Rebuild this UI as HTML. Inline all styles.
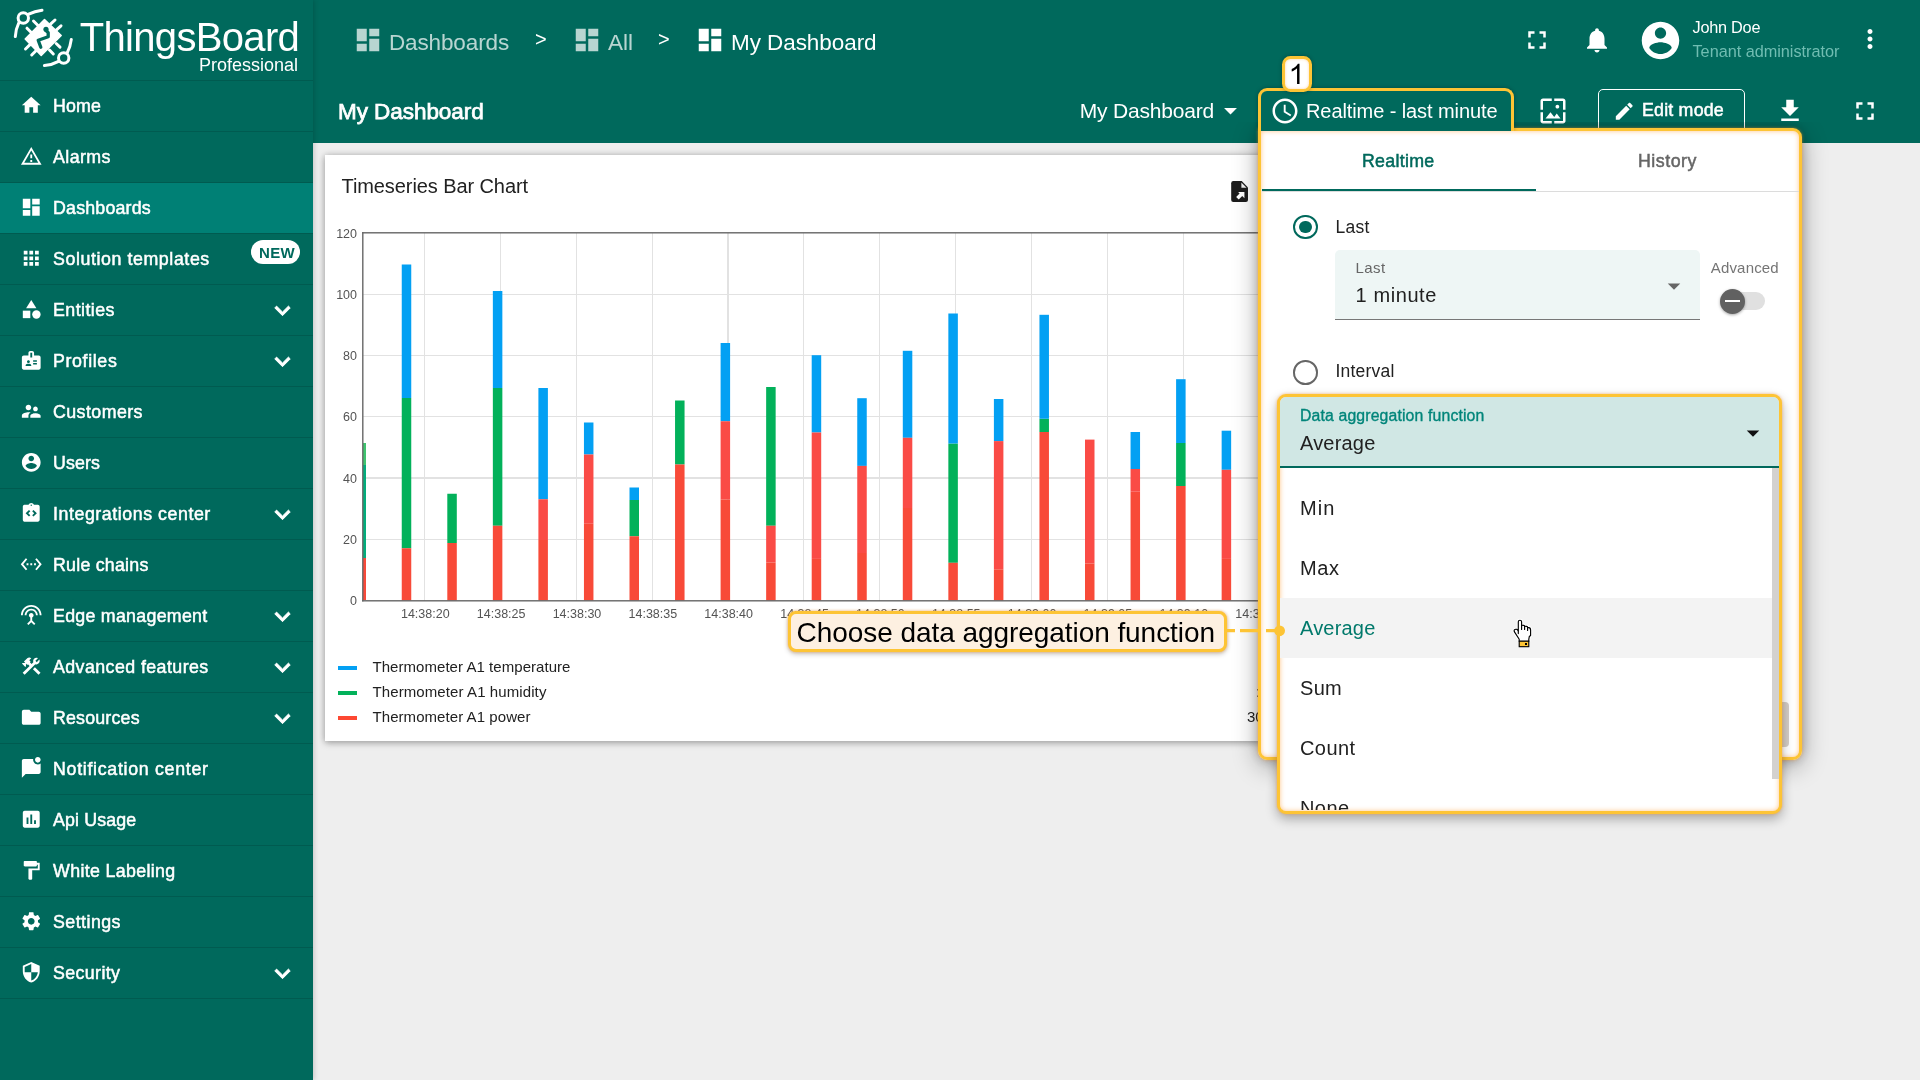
<!DOCTYPE html>
<html><head><meta charset="utf-8"><title>ThingsBoard</title>
<style>
html,body{margin:0;padding:0;}
body{width:1920px;height:1080px;overflow:hidden;position:relative;background:#eeeeee;font-family:"Liberation Sans",sans-serif;}
.ic{position:absolute;display:block;}
.t{position:absolute;white-space:nowrap;}
.a{position:absolute;}
.mi{height:24px;line-height:24px;font-size:17px;font-weight:bold;color:#fff;letter-spacing:0.1px;}
#root{position:absolute;left:0;top:0;width:1920px;height:1080px;overflow:hidden;will-change:transform;}

</style></head>
<body>
<div id="root">
<div class="a" style="left:0;top:0;width:1920px;height:143px;background:#00695c;"></div>
<div class="a" style="left:0;top:0;width:313px;height:1080px;background:#00695c;box-shadow:1px 0 5px rgba(0,0,0,0.18);"></div>
<div class="a" style="left:0;top:80px;width:313px;height:1px;background:rgba(0,0,0,0.13);"></div>
<div class="a" style="left:0;top:131px;width:313px;height:1px;background:rgba(0,0,0,0.13);"></div>
<div class="a" style="left:0;top:182px;width:313px;height:1px;background:rgba(0,0,0,0.13);"></div>
<div class="a" style="left:0;top:233px;width:313px;height:1px;background:rgba(0,0,0,0.13);"></div>
<div class="a" style="left:0;top:284px;width:313px;height:1px;background:rgba(0,0,0,0.13);"></div>
<div class="a" style="left:0;top:335px;width:313px;height:1px;background:rgba(0,0,0,0.13);"></div>
<div class="a" style="left:0;top:386px;width:313px;height:1px;background:rgba(0,0,0,0.13);"></div>
<div class="a" style="left:0;top:437px;width:313px;height:1px;background:rgba(0,0,0,0.13);"></div>
<div class="a" style="left:0;top:488px;width:313px;height:1px;background:rgba(0,0,0,0.13);"></div>
<div class="a" style="left:0;top:539px;width:313px;height:1px;background:rgba(0,0,0,0.13);"></div>
<div class="a" style="left:0;top:590px;width:313px;height:1px;background:rgba(0,0,0,0.13);"></div>
<div class="a" style="left:0;top:641px;width:313px;height:1px;background:rgba(0,0,0,0.13);"></div>
<div class="a" style="left:0;top:692px;width:313px;height:1px;background:rgba(0,0,0,0.13);"></div>
<div class="a" style="left:0;top:743px;width:313px;height:1px;background:rgba(0,0,0,0.13);"></div>
<div class="a" style="left:0;top:794px;width:313px;height:1px;background:rgba(0,0,0,0.13);"></div>
<div class="a" style="left:0;top:845px;width:313px;height:1px;background:rgba(0,0,0,0.13);"></div>
<div class="a" style="left:0;top:896px;width:313px;height:1px;background:rgba(0,0,0,0.13);"></div>
<div class="a" style="left:0;top:947px;width:313px;height:1px;background:rgba(0,0,0,0.13);"></div>
<div class="a" style="left:0;top:998px;width:313px;height:1px;background:rgba(0,0,0,0.13);"></div>
<div class="a" style="left:0;top:183px;width:313px;height:50px;background:#008075;"></div>
<svg class="ic" style="left:20px;top:93.8px;width:22.5px;height:22.5px;fill:#fff;" viewBox="0 0 24 24"><path d="M10 20v-6h4v6h5v-8h3L12 3 2 12h3v8z"/></svg>
<div class="t" style="left:53px;top:93.9px;height:25px;line-height:25px;font-size:17.8px;color:#fff;font-weight:normal;letter-spacing:0.129px;-webkit-text-stroke:0.5px #fff;">Home</div>
<svg class="ic" style="left:20px;top:144.8px;width:22.5px;height:22.5px;fill:#fff;" viewBox="0 0 24 24"><path d="M12 5.99L19.53 19H4.47L12 5.99M12 2L1 21h22L12 2zm1 14h-2v2h2v-2zm0-6h-2v4h2v-4z"/></svg>
<div class="t" style="left:53px;top:144.9px;height:25px;line-height:25px;font-size:17.8px;color:#fff;font-weight:normal;letter-spacing:0.436px;-webkit-text-stroke:0.5px #fff;">Alarms</div>
<svg class="ic" style="left:20px;top:195.8px;width:22.5px;height:22.5px;fill:#fff;" viewBox="0 0 24 24"><path d="M3 13h8V3H3v10zm0 8h8v-6H3v6zm10 0h8V11h-8v10zm0-18v6h8V3h-8z"/></svg>
<div class="t" style="left:53px;top:195.9px;height:25px;line-height:25px;font-size:17.8px;color:#fff;font-weight:normal;letter-spacing:0.202px;-webkit-text-stroke:0.5px #fff;">Dashboards</div>
<svg class="ic" style="left:20px;top:246.8px;width:22.5px;height:22.5px;fill:#fff;" viewBox="0 0 24 24"><path d="M4 8h4V4H4v4zm6 12h4v-4h-4v4zm-6 0h4v-4H4v4zm0-6h4v-4H4v4zm6 0h4v-4h-4v4zm6-10v4h4V4h-4zm-6 4h4V4h-4v4zm6 6h4v-4h-4v4zm0 6h4v-4h-4v4z"/></svg>
<div class="t" style="left:53px;top:246.89999999999998px;height:25px;line-height:25px;font-size:17.8px;color:#fff;font-weight:normal;letter-spacing:0.586px;-webkit-text-stroke:0.5px #fff;">Solution templates</div>
<svg class="ic" style="left:20px;top:297.8px;width:22.5px;height:22.5px;fill:#fff;" viewBox="0 0 24 24"><path d="M12 2l-5.5 9h11z"/><circle cx="17.5" cy="17.5" r="4.5"/><path d="M3 13.5h8v8H3z"/></svg>
<div class="t" style="left:53px;top:297.9px;height:25px;line-height:25px;font-size:17.8px;color:#fff;font-weight:normal;letter-spacing:0.453px;-webkit-text-stroke:0.5px #fff;">Entities</div>
<svg class="ic" style="left:266.5px;top:294.5px;width:31px;height:31px;fill:#fff;stroke:#fff;stroke-width:0.7;" viewBox="0 0 24 24"><path d="M16.59 8.59L12 13.170 7.410 8.590 6 10l6 6 6-6z"/></svg>
<svg class="ic" style="left:20px;top:348.8px;width:22.5px;height:22.5px;fill:#fff;" viewBox="0 0 24 24"><path d="M20 7h-5V4c0-1.1-.9-2-2-2h-2c-1.1 0-2 .9-2 2v3H4c-1.1 0-2 .9-2 2v11c0 1.1.9 2 2 2h16c1.1 0 2-.9 2-2V9c0-1.1-.9-2-2-2zM9 12c.83 0 1.5.67 1.5 1.5S9.83 15 9 15s-1.5-.67-1.5-1.5S8.17 12 9 12zm3 6H6v-.75c0-1 2-1.5 3-1.5s3 .5 3 1.5V18zm1-9h-2V4h2v5zm5 7.5h-4V15h4v1.5zm0-3h-4V12h4v1.5z"/></svg>
<div class="t" style="left:53px;top:348.9px;height:25px;line-height:25px;font-size:17.8px;color:#fff;font-weight:normal;letter-spacing:0.643px;-webkit-text-stroke:0.5px #fff;">Profiles</div>
<svg class="ic" style="left:266.5px;top:345.5px;width:31px;height:31px;fill:#fff;stroke:#fff;stroke-width:0.7;" viewBox="0 0 24 24"><path d="M16.59 8.59L12 13.170 7.410 8.590 6 10l6 6 6-6z"/></svg>
<svg class="ic" style="left:20px;top:399.8px;width:22.5px;height:22.5px;fill:#fff;" viewBox="0 0 24 24"><path d="M16.5 12c1.38 0 2.49-1.12 2.49-2.5S17.88 7 16.5 7C15.12 7 14 8.12 14 9.5s1.12 2.5 2.5 2.5zM9 11c1.66 0 2.99-1.34 2.99-3S10.66 5 9 5C7.34 5 6 6.34 6 8s1.34 3 3 3zm7.5 3c-1.83 0-5.5.92-5.5 2.75V19h11v-2.25c0-1.83-3.67-2.75-5.5-2.75zM9 13c-2.33 0-7 1.17-7 3.5V19h7v-2.25c0-.85.33-2.34 2.37-3.47C10.5 13.1 9.66 13 9 13z"/></svg>
<div class="t" style="left:53px;top:399.9px;height:25px;line-height:25px;font-size:17.8px;color:#fff;font-weight:normal;letter-spacing:0.438px;-webkit-text-stroke:0.5px #fff;">Customers</div>
<svg class="ic" style="left:20px;top:450.8px;width:22.5px;height:22.5px;fill:#fff;" viewBox="0 0 24 24"><path d="M12 2C6.48 2 2 6.48 2 12s4.48 10 10 10 10-4.48 10-10S17.52 2 12 2zm0 3c1.66 0 3 1.34 3 3s-1.34 3-3 3-3-1.34-3-3 1.34-3 3-3zm0 14.2c-2.5 0-4.71-1.28-6-3.22.03-1.99 4-3.08 6-3.08 1.99 0 5.97 1.09 6 3.08-1.29 1.94-3.5 3.220-6 3.220z"/></svg>
<div class="t" style="left:53px;top:450.9px;height:25px;line-height:25px;font-size:17.8px;color:#fff;font-weight:normal;letter-spacing:0.103px;-webkit-text-stroke:0.5px #fff;">Users</div>
<svg class="ic" style="left:20px;top:501.8px;width:22.5px;height:22.5px;fill:#fff;" viewBox="0 0 24 24"><path d="M19 3h-4.180C14.4 1.84 13.3 1 12 1s-2.4.84-2.82 2H5c-.14 0-.27.01-.4.04-.39.08-.74.28-1.010.55-.18.18-.33.4-.43.64-.1.23-.16.49-.16.77v14c0 .27.06.54.16.78s.25.45.43.64c.27.27.62.47 1.010.55.13.02.26.03.4.03h14c1.1 0 2-.9 2-2V5c0-1.1-.9-2-2-2zm-8 11.170l-1.410 1.420L6 12l3.590-3.590L11 9.830 8.830 12 11 14.170zm1-9.920c-.41 0-.75-.34-.75-.75s.34-.75.75-.75.75.34.75.75-.34.75-.75.75zm2.410 11.340L13 14.170 15.170 12 13 9.830l1.410-1.420L18 12l-3.590 3.590z"/></svg>
<div class="t" style="left:53px;top:501.9px;height:25px;line-height:25px;font-size:17.8px;color:#fff;font-weight:normal;letter-spacing:0.556px;-webkit-text-stroke:0.5px #fff;">Integrations center</div>
<svg class="ic" style="left:266.5px;top:498.5px;width:31px;height:31px;fill:#fff;stroke:#fff;stroke-width:0.7;" viewBox="0 0 24 24"><path d="M16.59 8.59L12 13.170 7.410 8.590 6 10l6 6 6-6z"/></svg>
<svg class="ic" style="left:20px;top:552.8px;width:22.5px;height:22.5px;fill:#fff;" viewBox="0 0 24 24"><path d="M7.77 6.76L6.23 5.48.82 12l5.410 6.520 1.540-1.280L3.420 12l4.350-5.240zM7 13h2v-2H7v2zm10-2h-2v2h2v-2zm-6 2h2v-2h-2v2zm6.770-7.520l-1.540 1.280L20.580 12l-4.350 5.240 1.540 1.280L23.180 12l-5.410-6.520z"/></svg>
<div class="t" style="left:53px;top:552.9px;height:25px;line-height:25px;font-size:17.8px;color:#fff;font-weight:normal;letter-spacing:0.236px;-webkit-text-stroke:0.5px #fff;">Rule chains</div>
<svg class="ic" style="left:20px;top:603.8px;width:22.5px;height:22.5px;fill:#fff;" viewBox="0 0 24 24"><path d="M12 5c-3.870 0-7 3.130-7 7h2c0-2.760 2.240-5 5-5s5 2.240 5 5h2c0-3.870-3.130-7-7-7zm1 9.290c.88-.39 1.5-1.260 1.5-2.290 0-1.380-1.120-2.500-2.500-2.500S9.500 10.620 9.500 12c0 1.020.62 1.900 1.500 2.290v3.300L7.590 21 9 22.410l3-3 3 3L16.410 21 13 17.590v-3.300zM12 1C5.930 1 1 5.930 1 12h2c0-4.970 4.030-9 9-9s9 4.030 9 9h2c0-6.070-4.930-11-11-11z"/></svg>
<div class="t" style="left:53px;top:603.9px;height:25px;line-height:25px;font-size:17.8px;color:#fff;font-weight:normal;letter-spacing:0.279px;-webkit-text-stroke:0.5px #fff;">Edge management</div>
<svg class="ic" style="left:266.5px;top:600.5px;width:31px;height:31px;fill:#fff;stroke:#fff;stroke-width:0.7;" viewBox="0 0 24 24"><path d="M16.59 8.59L12 13.170 7.410 8.590 6 10l6 6 6-6z"/></svg>
<svg class="ic" style="left:20px;top:654.8px;width:22.5px;height:22.5px;fill:#fff;" viewBox="0 0 24 24"><path d="M13.783 15.172l2.121-2.121 5.996 5.996-2.121 2.121zM17.5 10c1.930 0 3.500-1.570 3.500-3.500 0-.58-.16-1.120-.41-1.600l-2.700 2.700-1.490-1.490 2.700-2.700c-.48-.25-1.020-.41-1.600-.41C15.570 3 14 4.570 14 6.500c0 .41.08.8.21 1.160l-1.850 1.850-1.780-1.780.71-.71-1.410-1.410L12 3.490c-1.170-1.170-3.070-1.170-4.240 0L4.220 7.030l1.410 1.410H2.810l-.71.71 3.540 3.540.71-.71V9.150l1.410 1.410.71-.71 1.780 1.780-7.410 7.410 2.120 2.120L16.340 9.790c.36.13.75.21 1.160.21z"/></svg>
<div class="t" style="left:53px;top:654.9px;height:25px;line-height:25px;font-size:17.8px;color:#fff;font-weight:normal;letter-spacing:0.433px;-webkit-text-stroke:0.5px #fff;">Advanced features</div>
<svg class="ic" style="left:266.5px;top:651.5px;width:31px;height:31px;fill:#fff;stroke:#fff;stroke-width:0.7;" viewBox="0 0 24 24"><path d="M16.59 8.59L12 13.170 7.410 8.590 6 10l6 6 6-6z"/></svg>
<svg class="ic" style="left:20px;top:705.8px;width:22.5px;height:22.5px;fill:#fff;" viewBox="0 0 24 24"><path d="M10 4H4c-1.1 0-1.990.9-1.990 2L2 18c0 1.100.9 2 2 2h16c1.100 0 2-.9 2-2V8c0-1.100-.9-2-2-2h-8l-2-2z"/></svg>
<div class="t" style="left:53px;top:705.9px;height:25px;line-height:25px;font-size:17.8px;color:#fff;font-weight:normal;letter-spacing:0.191px;-webkit-text-stroke:0.5px #fff;">Resources</div>
<svg class="ic" style="left:266.5px;top:702.5px;width:31px;height:31px;fill:#fff;stroke:#fff;stroke-width:0.7;" viewBox="0 0 24 24"><path d="M16.59 8.59L12 13.170 7.410 8.590 6 10l6 6 6-6z"/></svg>
<svg class="ic" style="left:20px;top:756.8px;width:22.5px;height:22.5px;fill:#fff;" viewBox="0 0 24 24"><path d="M22 6.980V16c0 1.100-.9 2-2 2H6l-4 4V4c0-1.100.9-2 2-2h10.100c-.06.32-.1.66-.1 1 0 2.760 2.240 5 5 5 1.130 0 2.160-.39 3-1.020zM16 3c0 1.660 1.340 3 3 3s3-1.340 3-3-1.340-3-3-3-3 1.340-3 3z"/></svg>
<div class="t" style="left:53px;top:756.9px;height:25px;line-height:25px;font-size:17.8px;color:#fff;font-weight:normal;letter-spacing:0.701px;-webkit-text-stroke:0.5px #fff;">Notification center</div>
<svg class="ic" style="left:20px;top:807.8px;width:22.5px;height:22.5px;fill:#fff;" viewBox="0 0 24 24"><path d="M19 3H5c-1.100 0-2 .9-2 2v14c0 1.100.9 2 2 2h14c1.100 0 2-.9 2-2V5c0-1.100-.9-2-2-2zM9 17H7v-7h2v7zm4 0h-2V7h2v10zm4 0h-2v-4h2v4z"/></svg>
<div class="t" style="left:53px;top:807.9px;height:25px;line-height:25px;font-size:17.8px;color:#fff;font-weight:normal;letter-spacing:0.141px;-webkit-text-stroke:0.5px #fff;">Api Usage</div>
<svg class="ic" style="left:20px;top:858.8px;width:22.5px;height:22.5px;fill:#fff;" viewBox="0 0 24 24"><path d="M18 4V3c0-.55-.45-1-1-1H5c-.55 0-1 .45-1 1v4c0 .55.45 1 1 1h12c.55 0 1-.45 1-1V6h1v4H9v11c0 .55.45 1 1 1h2c.55 0 1-.45 1-1v-9h8V4h-3z"/></svg>
<div class="t" style="left:53px;top:858.9px;height:25px;line-height:25px;font-size:17.8px;color:#fff;font-weight:normal;letter-spacing:0.353px;-webkit-text-stroke:0.5px #fff;">White Labeling</div>
<svg class="ic" style="left:20px;top:909.8px;width:22.5px;height:22.5px;fill:#fff;" viewBox="0 0 24 24"><path d="M19.14 12.94c.04-.3.06-.61.06-.94 0-.32-.02-.64-.07-.94l2.030-1.580c.18-.14.23-.41.12-.61l-1.920-3.320c-.12-.22-.37-.29-.59-.22l-2.390.96c-.5-.38-1.030-.7-1.620-.94l-.36-2.540c-.04-.24-.24-.41-.48-.41h-3.840c-.24 0-.43.17-.47.41l-.36 2.540c-.59.24-1.130.57-1.620.94l-2.390-.96c-.22-.08-.47 0-.59.22L2.740 8.870c-.12.21-.08.47.12.61l2.030 1.580c-.05.3-.09.63-.09.940s.02.640.07.940l-2.030 1.580c-.18.14-.23.41-.12.61l1.920 3.320c.12.22.37.29.59.22l2.390-.96c.5.38 1.030.7 1.620.94l.36 2.540c.05.24.24.41.48.41h3.840c.24 0 .44-.17.47-.41l.36-2.540c.59-.24 1.130-.56 1.620-.94l2.390.96c.22.08.47 0 .59-.22l1.920-3.320c.12-.22.07-.47-.12-.61l-2.010-1.580zM12 15.600c-1.980 0-3.600-1.620-3.600-3.600s1.620-3.600 3.600-3.600 3.600 1.620 3.600 3.600-1.620 3.600-3.600 3.600z"/></svg>
<div class="t" style="left:53px;top:909.9px;height:25px;line-height:25px;font-size:17.8px;color:#fff;font-weight:normal;letter-spacing:0.46px;-webkit-text-stroke:0.5px #fff;">Settings</div>
<svg class="ic" style="left:20px;top:960.8px;width:22.5px;height:22.5px;fill:#fff;" viewBox="0 0 24 24"><path d="M12 1L3 5v6c0 5.550 3.840 10.740 9 12 5.160-1.260 9-6.450 9-12V5l-9-4zm0 10.990h7c-.53 4.120-3.280 7.790-7 8.940V12H5V6.300l7-3.110v8.800z"/></svg>
<div class="t" style="left:53px;top:960.9px;height:25px;line-height:25px;font-size:17.8px;color:#fff;font-weight:normal;letter-spacing:0.387px;-webkit-text-stroke:0.5px #fff;">Security</div>
<svg class="ic" style="left:266.5px;top:957.5px;width:31px;height:31px;fill:#fff;stroke:#fff;stroke-width:0.7;" viewBox="0 0 24 24"><path d="M16.59 8.59L12 13.170 7.410 8.590 6 10l6 6 6-6z"/></svg>
<div class="a" style="left:251px;top:240px;width:49px;height:24px;border-radius:12px;background:#fff;"></div>
<div class="t" style="left:259px;top:242.0px;height:21px;line-height:21px;font-size:15px;color:#00695c;font-weight:bold;letter-spacing:0.3px;">NEW</div>
<div class="t" style="left:79.7px;top:9.0px;height:56px;line-height:56px;font-size:40px;color:#fff;font-weight:normal;letter-spacing:-0.664px;">ThingsBoard</div>
<div class="t" style="left:199px;top:52.5px;height:25px;line-height:25px;font-size:18px;color:#fff;font-weight:normal;letter-spacing:-0.005px;">Professional</div>
<svg class="ic" style="left:0;top:0;width:84px;height:76px;" viewBox="0 0 84 76" fill="none" stroke="#fff" stroke-linecap="round">
<g stroke-width="3">
<path d="M33.500 21l4.500 4.500M27 28.200l4.500 4.500M55 20l-4.500 4.200M61 25.800l-4.500 4M25.500 49l4.500-4.300M31.700 55l4.300-4.300M49.500 50l3.800 4M56.200 43.500l3.800 3.600"/>
<path d="M28.700 14.200c4-2 8.500-3.300 13.300-3.900M18.800 22.800c-2 4-3.200 8.800-3.500 13.800"/>
<path d="M67.300 52.600c2-3.800 3.400-8.400 4-13.200M58.600 61.400c-4 2.200-9 3.700-14.200 4.200"/>
</g>
<circle cx="23.300" cy="18" r="5.200" stroke-width="3"/>
<circle cx="63.700" cy="58" r="5.200" stroke-width="3"/>
<path d="M44.500 19.500l16.700 16-20 20L25.200 39z" fill="#fff" stroke="#fff" stroke-width="1.500" stroke-linejoin="round"/>
<circle cx="46" cy="29.300" r="2.600" fill="#00695c" stroke="none"/>
<path d="M46 30.500l2.200 2.200v4l-10 3.500 2.600 7" stroke="#00695c" stroke-width="3.300" stroke-linejoin="round"/>
</svg>
<svg class="ic" style="left:352.5px;top:25px;width:30px;height:30px;fill:rgba(255,255,255,0.72);" viewBox="0 0 24 24"><path d="M3 13h8V3H3v10zm0 8h8v-6H3v6zm10 0h8V11h-8v10zm0-18v6h8V3h-8z"/></svg>
<div class="t" style="left:389px;top:27.0px;height:31px;line-height:31px;font-size:22.5px;color:rgba(255,255,255,0.72);font-weight:normal;letter-spacing:-0.133px;">Dashboards</div>
<div class="t" style="left:535px;top:25.0px;height:28px;line-height:28px;font-size:20px;color:#fff;font-weight:normal;letter-spacing:0px;">&gt;</div>
<svg class="ic" style="left:571.5px;top:25px;width:30px;height:30px;fill:rgba(255,255,255,0.72);" viewBox="0 0 24 24"><path d="M3 13h8V3H3v10zm0 8h8v-6H3v6zm10 0h8V11h-8v10zm0-18v6h8V3h-8z"/></svg>
<div class="t" style="left:608px;top:27.0px;height:31px;line-height:31px;font-size:22.5px;color:rgba(255,255,255,0.72);font-weight:normal;letter-spacing:0px;">All</div>
<div class="t" style="left:658px;top:25.0px;height:28px;line-height:28px;font-size:20px;color:#fff;font-weight:normal;letter-spacing:0px;">&gt;</div>
<svg class="ic" style="left:695px;top:25px;width:30px;height:30px;fill:#fff;" viewBox="0 0 24 24"><path d="M3 13h8V3H3v10zm0 8h8v-6H3v6zm10 0h8V11h-8v10zm0-18v6h8V3h-8z"/></svg>
<div class="t" style="left:731px;top:27.0px;height:31px;line-height:31px;font-size:22.5px;color:#fff;font-weight:normal;letter-spacing:-0.068px;">My Dashboard</div>
<svg class="ic" style="left:1522px;top:24.5px;width:30px;height:30px;fill:#fff;" viewBox="0 0 24 24"><path d="M7 14H5v5h5v-2H7v-3zm-2-4h2V7h3V5H5v5zm12 7h-3v2h5v-5h-2v3zM14 5v2h3v3h2V5h-5z"/></svg>
<svg class="ic" style="left:1582px;top:25px;width:30px;height:30px;fill:#fff;" viewBox="0 0 24 24"><path d="M12 22c1.100 0 2-.9 2-2h-4c0 1.100.89 2 2 2zm6-6v-5c0-3.070-1.640-5.640-4.500-6.320V4c0-.83-.67-1.500-1.500-1.500s-1.500.67-1.500 1.500v.68C7.630 5.360 6 7.920 6 11v5l-2 2v1h16v-1l-2-2z"/></svg>
<svg class="ic" style="left:1637.5px;top:17.5px;width:45px;height:45px;fill:#fff;" viewBox="0 0 24 24"><path d="M12 2C6.48 2 2 6.48 2 12s4.48 10 10 10 10-4.48 10-10S17.52 2 12 2zm0 3c1.66 0 3 1.34 3 3s-1.34 3-3 3-3-1.34-3-3 1.34-3 3-3zm0 14.2c-2.5 0-4.71-1.28-6-3.22.03-1.99 4-3.08 6-3.08 1.99 0 5.97 1.09 6 3.08-1.29 1.94-3.5 3.220-6 3.220z"/></svg>
<div class="t" style="left:1692.5px;top:16.0px;height:23px;line-height:23px;font-size:16.3px;color:#fff;font-weight:normal;letter-spacing:-0.247px;">John Doe</div>
<div class="t" style="left:1692.5px;top:39.5px;height:23px;line-height:23px;font-size:16.3px;color:#70bdb2;font-weight:normal;letter-spacing:-0.034px;">Tenant administrator</div>
<svg class="ic" style="left:1855px;top:24.2px;width:30px;height:30px;fill:#fff;" viewBox="0 0 24 24"><path d="M12 8c1.100 0 2-.9 2-2s-.9-2-2-2-2 .9-2 2 .9 2 2 2zm0 2c-1.100 0-2 .9-2 2s.9 2 2 2 2-.9 2-2-.9-2-2-2zm0 6c-1.100 0-2 .9-2 2s.9 2 2 2 2-.9 2-2-.9-2-2-2z"/></svg>
<div class="t" style="left:338px;top:95.5px;height:31px;line-height:31px;font-size:22.5px;color:#fff;font-weight:normal;letter-spacing:-0.052px;-webkit-text-stroke:0.75px #fff;">My Dashboard</div>
<div class="t" style="left:1079.7px;top:95.8px;height:29px;line-height:29px;font-size:21px;color:#fff;font-weight:normal;letter-spacing:-0.189px;">My Dashboard</div>
<svg class="ic" style="left:1214.5px;top:95.3px;width:31px;height:31px;fill:#fff;" viewBox="0 0 24 24"><path d="M7 10l5 5 5-5z"/></svg>
<svg class="ic" style="left:1538px;top:96px;width:30px;height:30px;fill:#fff;" viewBox="0 0 24 24"><path d="M4 4h7V2H4c-1.100 0-2 .9-2 2v7h2V4zm6 9l-4 5h12l-3-4-2.030 2.710L10 13zm7-4.500c0-.83-.67-1.500-1.500-1.500S14 7.670 14 8.500s.67 1.500 1.500 1.500S17 9.330 17 8.500zM20 2h-7v2h7v7h2V4c0-1.100-.9-2-2-2zm0 18h-7v2h7c1.100 0 2-.9 2-2v-7h-2v7zM4 13H2v7c0 1.100.9 2 2 2h7v-2H4v-7z"/></svg>
<div class="a" style="left:1598px;top:89px;width:145px;height:44px;border:1px solid #fff;border-radius:5px;"></div>
<svg class="ic" style="left:1612.5px;top:99.5px;width:22.5px;height:22.5px;fill:#fff;" viewBox="0 0 24 24"><path d="M3 17.250V21h3.750L17.810 9.940l-3.750-3.750L3 17.250zM20.710 7.040c.39-.39.39-1.020 0-1.410l-2.340-2.340c-.39-.39-1.020-.39-1.410 0l-1.830 1.830 3.750 3.750 1.830-1.830z"/></svg>
<div class="t" style="left:1642px;top:98.0px;height:25px;line-height:25px;font-size:17.8px;color:#fff;font-weight:normal;letter-spacing:0.206px;-webkit-text-stroke:0.5px #fff;">Edit mode</div>
<svg class="ic" style="left:1775px;top:95.5px;width:30px;height:30px;fill:#fff;" viewBox="0 0 24 24"><path d="M19 9h-4V3H9v6H5l7 7 7-7zM5 18v2h14v-2H5z"/></svg>
<svg class="ic" style="left:1850px;top:95.7px;width:30px;height:30px;fill:#fff;" viewBox="0 0 24 24"><path d="M7 14H5v5h5v-2H7v-3zm-2-4h2V7h3V5H5v5zm12 7h-3v2h5v-5h-2v3zM14 5v2h3v3h2V5h-5z"/></svg>
<div class="a" style="left:325px;top:155px;width:1400px;height:586px;background:#fff;box-shadow:0 2px 7px rgba(0,0,0,0.28),0 0 7px rgba(0,0,0,0.15);"></div>
<div class="t" style="left:341.5px;top:171.5px;height:28px;line-height:28px;font-size:20px;color:#212121;font-weight:normal;letter-spacing:-0.085px;">Timeseries Bar Chart</div>
<svg class="ic" style="left:1226.800px;top:178.900px;width:25.200px;height:25.200px;" viewBox="0 0 24 24"><path d="M6 2h8l6 6v12a2 2 0 0 1-2 2H6a2 2 0 0 1-2-2V4a2 2 0 0 1 2-2z" fill="#1c1c1c"/><path d="M13.700 3.400V8.300h4.900z" fill="#f2f2f2"/><path d="M10.600 12.400h6v6l-2.100-2.100-3.300 3.300-2.500-2.500 3.300-3.300z" fill="#fff"/></svg>
<svg class="ic" style="left:325px;top:155px;width:1400px;height:586px;" viewBox="325 155 1400 586" shape-rendering="crispEdges"><rect x="424.00" y="233" width="1.2" height="367.5" fill="#e2e2e2"/><rect x="499.85" y="233" width="1.2" height="367.5" fill="#e2e2e2"/><rect x="575.70" y="233" width="1.2" height="367.5" fill="#e2e2e2"/><rect x="651.55" y="233" width="1.2" height="367.5" fill="#e2e2e2"/><rect x="727.40" y="233" width="1.2" height="367.5" fill="#e2e2e2"/><rect x="803.25" y="233" width="1.2" height="367.5" fill="#e2e2e2"/><rect x="879.10" y="233" width="1.2" height="367.5" fill="#e2e2e2"/><rect x="954.95" y="233" width="1.2" height="367.5" fill="#e2e2e2"/><rect x="1030.80" y="233" width="1.2" height="367.5" fill="#e2e2e2"/><rect x="1106.65" y="233" width="1.2" height="367.5" fill="#e2e2e2"/><rect x="1182.50" y="233" width="1.2" height="367.5" fill="#e2e2e2"/><rect x="1258.35" y="233" width="1.2" height="367.5" fill="#e2e2e2"/><rect x="1334.20" y="233" width="1.2" height="367.5" fill="#e2e2e2"/><rect x="1410.05" y="233" width="1.2" height="367.5" fill="#e2e2e2"/><rect x="1485.90" y="233" width="1.2" height="367.5" fill="#e2e2e2"/><rect x="1561.75" y="233" width="1.2" height="367.5" fill="#e2e2e2"/><rect x="1637.60" y="233" width="1.2" height="367.5" fill="#e2e2e2"/><rect x="1713.45" y="233" width="1.2" height="367.5" fill="#e2e2e2"/><rect x="363" y="538.65" width="1337" height="1.2" fill="#e2e2e2"/><rect x="363" y="477.40" width="1337" height="1.2" fill="#e2e2e2"/><rect x="363" y="416.15" width="1337" height="1.2" fill="#e2e2e2"/><rect x="363" y="354.90" width="1337" height="1.2" fill="#e2e2e2"/><rect x="363" y="293.65" width="1337" height="1.2" fill="#e2e2e2"/><g shape-rendering="geometricPrecision"><rect x="401.75" y="398" width="9.500" height="150.25" fill="#02b15a"/><rect x="401.75" y="264.5" width="9.500" height="133.50" fill="#03a0f3"/><rect x="401.75" y="548.25" width="9.500" height="52.25" fill="#f84a38"/><rect x="447.30" y="493.75" width="9.500" height="49.25" fill="#02b15a"/><rect x="447.30" y="543" width="9.500" height="57.50" fill="#f84a38"/><rect x="492.85" y="388" width="9.500" height="137.75" fill="#02b15a"/><rect x="492.85" y="291" width="9.500" height="97.00" fill="#03a0f3"/><rect x="492.85" y="525.75" width="9.500" height="74.75" fill="#f84a38"/><rect x="538.40" y="388" width="9.500" height="111.25" fill="#03a0f3"/><rect x="538.40" y="499.25" width="9.500" height="40.75" fill="#fa4b46"/><rect x="538.40" y="540" width="9.500" height="60.50" fill="#f84a38"/><rect x="583.95" y="422.5" width="9.500" height="32.00" fill="#03a0f3"/><rect x="583.95" y="454.5" width="9.500" height="69.25" fill="#fa4b46"/><rect x="583.95" y="523.75" width="9.500" height="76.75" fill="#f84a38"/><rect x="629.50" y="500" width="9.500" height="36.25" fill="#02b15a"/><rect x="629.50" y="487.5" width="9.500" height="12.50" fill="#03a0f3"/><rect x="629.50" y="536.25" width="9.500" height="64.25" fill="#f84a38"/><rect x="675.05" y="400.5" width="9.500" height="64.00" fill="#02b15a"/><rect x="675.05" y="464.5" width="9.500" height="136.00" fill="#f84a38"/><rect x="720.60" y="343" width="9.500" height="78.25" fill="#03a0f3"/><rect x="720.60" y="421.25" width="9.500" height="78.25" fill="#fa4b46"/><rect x="720.60" y="499.5" width="9.500" height="101.00" fill="#f84a38"/><rect x="766.15" y="387" width="9.500" height="138.75" fill="#02b15a"/><rect x="766.15" y="525.75" width="9.500" height="36.75" fill="#fa4b46"/><rect x="766.15" y="562.5" width="9.500" height="38.00" fill="#f84a38"/><rect x="811.70" y="355.2" width="9.500" height="77.30" fill="#03a0f3"/><rect x="811.70" y="432.5" width="9.500" height="126.40" fill="#fa4b46"/><rect x="811.70" y="558.9" width="9.500" height="41.60" fill="#f84a38"/><rect x="857.25" y="398.2" width="9.500" height="67.70" fill="#03a0f3"/><rect x="857.25" y="465.9" width="9.500" height="87.10" fill="#fa4b46"/><rect x="857.25" y="553" width="9.500" height="47.50" fill="#f84a38"/><rect x="902.80" y="350.8" width="9.500" height="87.00" fill="#03a0f3"/><rect x="902.80" y="437.8" width="9.500" height="70.20" fill="#fa4b46"/><rect x="902.80" y="508" width="9.500" height="92.50" fill="#f84a38"/><rect x="948.35" y="443.5" width="9.500" height="119.30" fill="#02b15a"/><rect x="948.35" y="313.5" width="9.500" height="130.00" fill="#03a0f3"/><rect x="948.35" y="562.8" width="9.500" height="37.70" fill="#f84a38"/><rect x="993.90" y="399" width="9.500" height="42.10" fill="#03a0f3"/><rect x="993.90" y="441.1" width="9.500" height="128.20" fill="#fa4b46"/><rect x="993.90" y="569.3" width="9.500" height="31.20" fill="#f84a38"/><rect x="1039.45" y="418.75" width="9.500" height="13.25" fill="#02b15a"/><rect x="1039.45" y="314.8" width="9.500" height="103.95" fill="#03a0f3"/><rect x="1039.45" y="432" width="9.500" height="168.50" fill="#f84a38"/><rect x="1085.00" y="439.6" width="9.500" height="123.90" fill="#fa4b46"/><rect x="1085.00" y="563.5" width="9.500" height="37.00" fill="#f84a38"/><rect x="1130.55" y="432" width="9.500" height="37.00" fill="#03a0f3"/><rect x="1130.55" y="469" width="9.500" height="22.70" fill="#fa4b46"/><rect x="1130.55" y="491.7" width="9.500" height="108.80" fill="#f84a38"/><rect x="1176.10" y="443" width="9.500" height="43.00" fill="#02b15a"/><rect x="1176.10" y="379.2" width="9.500" height="63.80" fill="#03a0f3"/><rect x="1176.10" y="486" width="9.500" height="114.50" fill="#f84a38"/><rect x="1221.65" y="430.7" width="9.500" height="39.10" fill="#03a0f3"/><rect x="1221.65" y="469.8" width="9.500" height="89.10" fill="#fa4b46"/><rect x="1221.65" y="558.9" width="9.500" height="41.60" fill="#f84a38"/></g><rect x="363.300" y="443" width="2.800" height="22" fill="#3fc46f"/><rect x="363.300" y="464.500" width="2.800" height="94" fill="#02ad7c"/><rect x="363.300" y="558" width="2.800" height="42" fill="#f84a3a"/><g shape-rendering="geometricPrecision" fill="#666"><rect x="362.1" y="232.1" width="1.400" height="369.3"/><rect x="362.1" y="232.1" width="1337" height="1.400"/><rect x="362.1" y="600.1" width="1337" height="1.400"/></g></svg>
<div class="t" style="left:320px;width:37px;text-align:right;top:593.0px;height:16px;line-height:16px;font-size:12.500px;color:#545454;">0</div>
<div class="t" style="left:320px;width:37px;text-align:right;top:531.75px;height:16px;line-height:16px;font-size:12.500px;color:#545454;">20</div>
<div class="t" style="left:320px;width:37px;text-align:right;top:470.5px;height:16px;line-height:16px;font-size:12.500px;color:#545454;">40</div>
<div class="t" style="left:320px;width:37px;text-align:right;top:409.25px;height:16px;line-height:16px;font-size:12.500px;color:#545454;">60</div>
<div class="t" style="left:320px;width:37px;text-align:right;top:348.0px;height:16px;line-height:16px;font-size:12.500px;color:#545454;">80</div>
<div class="t" style="left:320px;width:37px;text-align:right;top:286.75px;height:16px;line-height:16px;font-size:12.500px;color:#545454;">100</div>
<div class="t" style="left:320px;width:37px;text-align:right;top:225.5px;height:16px;line-height:16px;font-size:12.500px;color:#545454;">120</div>
<div class="t" style="left:395.3px;width:60px;text-align:center;top:605.500px;height:16px;line-height:16px;font-size:12.500px;color:#545454;">14:38:20</div>
<div class="t" style="left:471.15000000000003px;width:60px;text-align:center;top:605.500px;height:16px;line-height:16px;font-size:12.500px;color:#545454;">14:38:25</div>
<div class="t" style="left:547.0px;width:60px;text-align:center;top:605.500px;height:16px;line-height:16px;font-size:12.500px;color:#545454;">14:38:30</div>
<div class="t" style="left:622.85px;width:60px;text-align:center;top:605.500px;height:16px;line-height:16px;font-size:12.500px;color:#545454;">14:38:35</div>
<div class="t" style="left:698.7px;width:60px;text-align:center;top:605.500px;height:16px;line-height:16px;font-size:12.500px;color:#545454;">14:38:40</div>
<div class="t" style="left:774.5500000000001px;width:60px;text-align:center;top:605.500px;height:16px;line-height:16px;font-size:12.500px;color:#545454;">14:38:45</div>
<div class="t" style="left:850.4000000000001px;width:60px;text-align:center;top:605.500px;height:16px;line-height:16px;font-size:12.500px;color:#545454;">14:38:50</div>
<div class="t" style="left:926.25px;width:60px;text-align:center;top:605.500px;height:16px;line-height:16px;font-size:12.500px;color:#545454;">14:38:55</div>
<div class="t" style="left:1002.1000000000001px;width:60px;text-align:center;top:605.500px;height:16px;line-height:16px;font-size:12.500px;color:#545454;">14:39:00</div>
<div class="t" style="left:1077.95px;width:60px;text-align:center;top:605.500px;height:16px;line-height:16px;font-size:12.500px;color:#545454;">14:39:05</div>
<div class="t" style="left:1153.8px;width:60px;text-align:center;top:605.500px;height:16px;line-height:16px;font-size:12.500px;color:#545454;">14:39:10</div>
<div class="t" style="left:1229.6499999999999px;width:60px;text-align:center;top:605.500px;height:16px;line-height:16px;font-size:12.500px;color:#545454;">14:39:15</div>
<div class="a" style="left:338px;top:666.0px;width:19px;height:3.900px;background:#03a0f3;"></div>
<div class="t" style="left:372.5px;top:655.7px;height:21px;line-height:21px;font-size:15px;color:#212121;font-weight:normal;letter-spacing:0.048px;">Thermometer A1 temperature</div>
<div class="a" style="left:338px;top:691.0px;width:19px;height:3.900px;background:#02b15a;"></div>
<div class="t" style="left:372.5px;top:680.7px;height:21px;line-height:21px;font-size:15px;color:#212121;font-weight:normal;letter-spacing:0.098px;">Thermometer A1 humidity</div>
<div class="a" style="left:338px;top:716.0px;width:19px;height:3.900px;background:#fd4832;"></div>
<div class="t" style="left:372.5px;top:705.7px;height:21px;line-height:21px;font-size:15px;color:#212121;font-weight:normal;letter-spacing:0.063px;">Thermometer A1 power</div>
<div class="t" style="left:1256px;top:680.7px;height:21px;line-height:21px;font-size:15px;color:#212121;font-weight:normal;letter-spacing:0px;">:</div>
<div class="t" style="left:1247px;top:705.7px;height:21px;line-height:21px;font-size:15px;color:#212121;font-weight:normal;letter-spacing:0px;">30</div>
<div class="a" style="left:1258px;top:128px;width:544px;height:632px;border-radius:0 9px 9px 9px;box-shadow:0 0 3px rgba(255,150,40,0.6),0 6px 26px rgba(0,0,0,0.33),0 0 12px rgba(0,0,0,0.22);clip-path:inset(-6px -70px -70px -70px);"></div>
<div class="a" style="left:1258px;top:128px;width:538px;height:626px;border:3px solid #fdc435;border-radius:0 9px 9px 9px;background:#fff;box-shadow:inset 0 0 5px rgba(255,150,40,0.55);"></div>
<div class="a" style="left:1258px;top:88px;width:250px;height:40px;border:3px solid #fdc435;border-bottom:none;border-radius:9px 9px 0 0;background:#00695c;box-shadow:0 0 4px rgba(0,0,0,0.3);clip-path:inset(-6px -6px 0 -6px);"></div>
<svg class="ic" style="left:1270px;top:96px;width:30px;height:30px;fill:#fff;" viewBox="0 0 24 24"><path d="M11.990 2C6.470 2 2 6.480 2 12s4.470 10 9.990 10C17.520 22 22 17.520 22 12S17.520 2 11.990 2zM12 20c-4.420 0-8-3.580-8-8s3.580-8 8-8 8 3.580 8 8-3.580 8-8 8zm.5-13H11v6l5.250 3.150.75-1.230-4.500-2.670z"/></svg>
<div class="t" style="left:1306px;top:96.5px;height:28px;line-height:28px;font-size:20px;color:#fff;font-weight:normal;letter-spacing:-0.087px;">Realtime - last minute</div>
<div class="a" style="left:1282px;top:56px;width:23.700px;height:30px;border:3px solid #fdc435;border-radius:8.500px;background:#fff;box-shadow:inset 0 0 3px rgba(255,150,40,0.4),0 0 4px rgba(0,0,0,0.3);"></div>
<svg class="ic" style="left:1285px;top:59px;width:24px;height:30px;" viewBox="1285 59 24 30"><path d="M1299.500 63.800V83.900H1297.050V68.200C1295.700 69.500 1293.800 70.700 1291.700 71.500V69.100C1294.500 67.800 1296.900 65.800 1297.900 63.800Z" fill="#000"/></svg>
<div class="a" style="left:1261.500px;top:190.500px;width:537px;height:1px;background:#dcdcdc;"></div>
<div class="a" style="left:1261.500px;top:188.750px;width:274.500px;height:2.500px;background:#00695c;"></div>
<div class="t" style="left:1362px;top:148.5px;height:25px;line-height:25px;font-size:17.8px;color:#00695c;font-weight:normal;letter-spacing:0.283px;-webkit-text-stroke:0.5px #00695c;">Realtime</div>
<div class="t" style="left:1638px;top:148.5px;height:25px;line-height:25px;font-size:17.8px;color:#666;font-weight:normal;letter-spacing:0.517px;-webkit-text-stroke:0.5px #666;">History</div>
<div class="a" style="left:1293px;top:214.500px;width:20.600px;height:20.600px;border:2.200px solid #00695c;border-radius:50%;"></div>
<div class="a" style="left:1299.250px;top:220.750px;width:12.500px;height:12.500px;background:#00695c;border-radius:50%;"></div>
<div class="t" style="left:1335.5px;top:215.0px;height:24px;line-height:24px;font-size:17.5px;color:#212121;font-weight:normal;letter-spacing:0.231px;">Last</div>
<div class="a" style="left:1335px;top:249.800px;width:365px;height:69px;background:#eef6f5;border-radius:5px 5px 0 0;border-bottom:1.200px solid #777;"></div>
<div class="t" style="left:1355.5px;top:257.3px;height:21px;line-height:21px;font-size:15px;color:#666;font-weight:normal;letter-spacing:0.412px;">Last</div>
<div class="t" style="left:1355.5px;top:281.0px;height:28px;line-height:28px;font-size:20px;color:#212121;font-weight:normal;letter-spacing:0.599px;">1 minute</div>
<svg class="ic" style="left:1659px;top:270.5px;width:30px;height:30px;fill:#666;" viewBox="0 0 24 24"><path d="M7 10l5 5 5-5z"/></svg>
<div class="t" style="left:1710.8px;top:257.0px;height:21px;line-height:21px;font-size:15px;color:#757575;font-weight:normal;letter-spacing:0.16px;">Advanced</div>
<div class="a" style="left:1727px;top:292px;width:38px;height:17.500px;border-radius:9px;background:#e0e0e0;"></div>
<div class="a" style="left:1719.500px;top:288.500px;width:25px;height:25px;border-radius:50%;background:#616161;box-shadow:0 1px 3px rgba(0,0,0,0.35);"></div>
<div class="a" style="left:1724.500px;top:299.500px;width:15px;height:2.500px;background:#fff;"></div>
<div class="a" style="left:1293px;top:360.200px;width:20.600px;height:20.600px;border:2.200px solid #666;border-radius:50%;"></div>
<div class="t" style="left:1335.5px;top:359.3px;height:24px;line-height:24px;font-size:17.5px;color:#212121;font-weight:normal;letter-spacing:0.201px;">Interval</div>
<div class="a" style="left:1776px;top:702px;width:12.900px;height:44.500px;border-radius:4px;background:#d3ccc6;"></div>
<div class="a" style="left:1277px;top:394.100px;width:499px;height:414px;border:3px solid #fdc435;border-radius:9px;background:#fff;box-shadow:inset 0 0 5px rgba(255,150,40,0.55),0 0 3px rgba(255,150,40,0.6),0 5px 12px rgba(0,0,0,0.3);overflow:hidden;"><div class="a" style="left:0;top:0;width:499px;height:68.500px;background:#d0e7e4;"></div><div class="a" style="left:0;top:68.700px;width:499px;height:2.200px;background:#00695c;"></div><div class="a" style="left:0;top:200.600px;width:492.200px;height:59.900px;background:#f3f3f3;"></div><div class="a" style="left:492.200px;top:70.900px;width:6.800px;height:310.800px;background:#d3d1cf;"></div></div>
<div class="t" style="left:1300px;top:404.8px;height:22px;line-height:22px;font-size:15.8px;color:#00857a;font-weight:normal;letter-spacing:0.142px;-webkit-text-stroke:0.35px #00857a;">Data aggregation function</div>
<div class="t" style="left:1300px;top:428.8px;height:28px;line-height:28px;font-size:20px;color:#212121;font-weight:normal;letter-spacing:0.195px;">Average</div>
<svg class="ic" style="left:1738px;top:417.5px;width:30px;height:30px;fill:#111;" viewBox="0 0 24 24"><path d="M7 10l5 5 5-5z"/></svg>
<div class="t" style="left:1300px;top:494.0px;height:28px;line-height:28px;font-size:20px;color:#212121;font-weight:normal;letter-spacing:1.024px;">Min</div>
<div class="t" style="left:1300px;top:554.0px;height:28px;line-height:28px;font-size:20px;color:#212121;font-weight:normal;letter-spacing:0.572px;">Max</div>
<div class="t" style="left:1300px;top:614.0px;height:28px;line-height:28px;font-size:20px;color:#00796b;font-weight:normal;letter-spacing:0.195px;">Average</div>
<div class="t" style="left:1300px;top:674.0px;height:28px;line-height:28px;font-size:20px;color:#212121;font-weight:normal;letter-spacing:0.292px;">Sum</div>
<div class="t" style="left:1300px;top:734.0px;height:28px;line-height:28px;font-size:20px;color:#212121;font-weight:normal;letter-spacing:0.426px;">Count</div>
<div class="a" style="left:1290px;top:790px;width:200px;height:19.500px;overflow:hidden;"><div class="t" style="left:10px;top:4.0px;height:28px;line-height:28px;font-size:20px;color:#212121;font-weight:normal;letter-spacing:0.421px;">None</div></div>
<div class="a" style="left:788.300px;top:611px;width:432.700px;height:34.900px;border:3px solid #fdc435;border-radius:8px;background:#fdf0e1;box-shadow:0 0 3px rgba(255,150,40,0.6),0 2px 5px rgba(0,0,0,0.25);"></div>
<div class="t" style="left:796.5px;top:612.5px;height:39px;line-height:39px;font-size:28px;color:#000;font-weight:normal;letter-spacing:-0.057px;">Choose data aggregation function</div>
<svg class="ic" style="left:1224px;top:620px;width:64px;height:22px;" viewBox="1224 620 64 22"><path d="M1226.500 630.600H1235M1240 630.600H1260.800M1266 630.600H1279" stroke="#fdc435" stroke-width="3.100" fill="none"/><circle cx="1279.600" cy="630.800" r="5.400" fill="#fdc435"/></svg>
<svg class="ic" style="left:1508px;top:614px;width:30px;height:38px;" viewBox="1508 614 30 38"><path d="M1519.200 641.200V639.300L1514.300 631.600C1513.800 630.200 1514.600 629.200 1516 629.300L1517 629.400 1518.300 630.800V621.800C1518.300 619.700 1521.600 619.700 1521.600 621.800V625.300L1523.800 625.400C1524.400 625.500 1524.600 626 1524.600 626.300L1526.600 626.400C1527.300 626.500 1527.600 627 1527.600 627.400 1529.500 627.400 1530.600 628.600 1530.600 630V635.500L1529.300 636.500 1528.800 639.300V641.200Z" fill="#fff" stroke="#fff" stroke-width="3.200" stroke-linejoin="round"/><rect x="1518.200" y="640.200" width="11.600" height="7.600" fill="#fff"/><path d="M1519.200 641.200V639.300L1514.300 631.600C1513.800 630.200 1514.600 629.200 1516 629.300L1517 629.400 1518.300 630.800V621.800C1518.300 619.700 1521.600 619.700 1521.600 621.800V625.300L1523.800 625.400C1524.400 625.500 1524.600 626 1524.600 626.300L1526.600 626.400C1527.300 626.500 1527.600 627 1527.600 627.400 1529.500 627.400 1530.600 628.600 1530.600 630V635.500L1529.300 636.500 1528.800 639.300V641.200Z" fill="#fff" stroke="#000" stroke-width="1.150" stroke-linejoin="round"/><path d="M1518.300 630.800V633.600M1521.600 625.300V629.500M1524.600 626.300V629.500M1527.600 627.400V630.400" stroke="#000" stroke-width="1.150" stroke-linecap="round"/><rect x="1519.200" y="641.200" width="9.600" height="5.500" fill="#fdc435" stroke="#000" stroke-width="1.150"/><rect x="1525" y="643" width="2" height="2" fill="#000"/></svg>
</div>
</body></html>
